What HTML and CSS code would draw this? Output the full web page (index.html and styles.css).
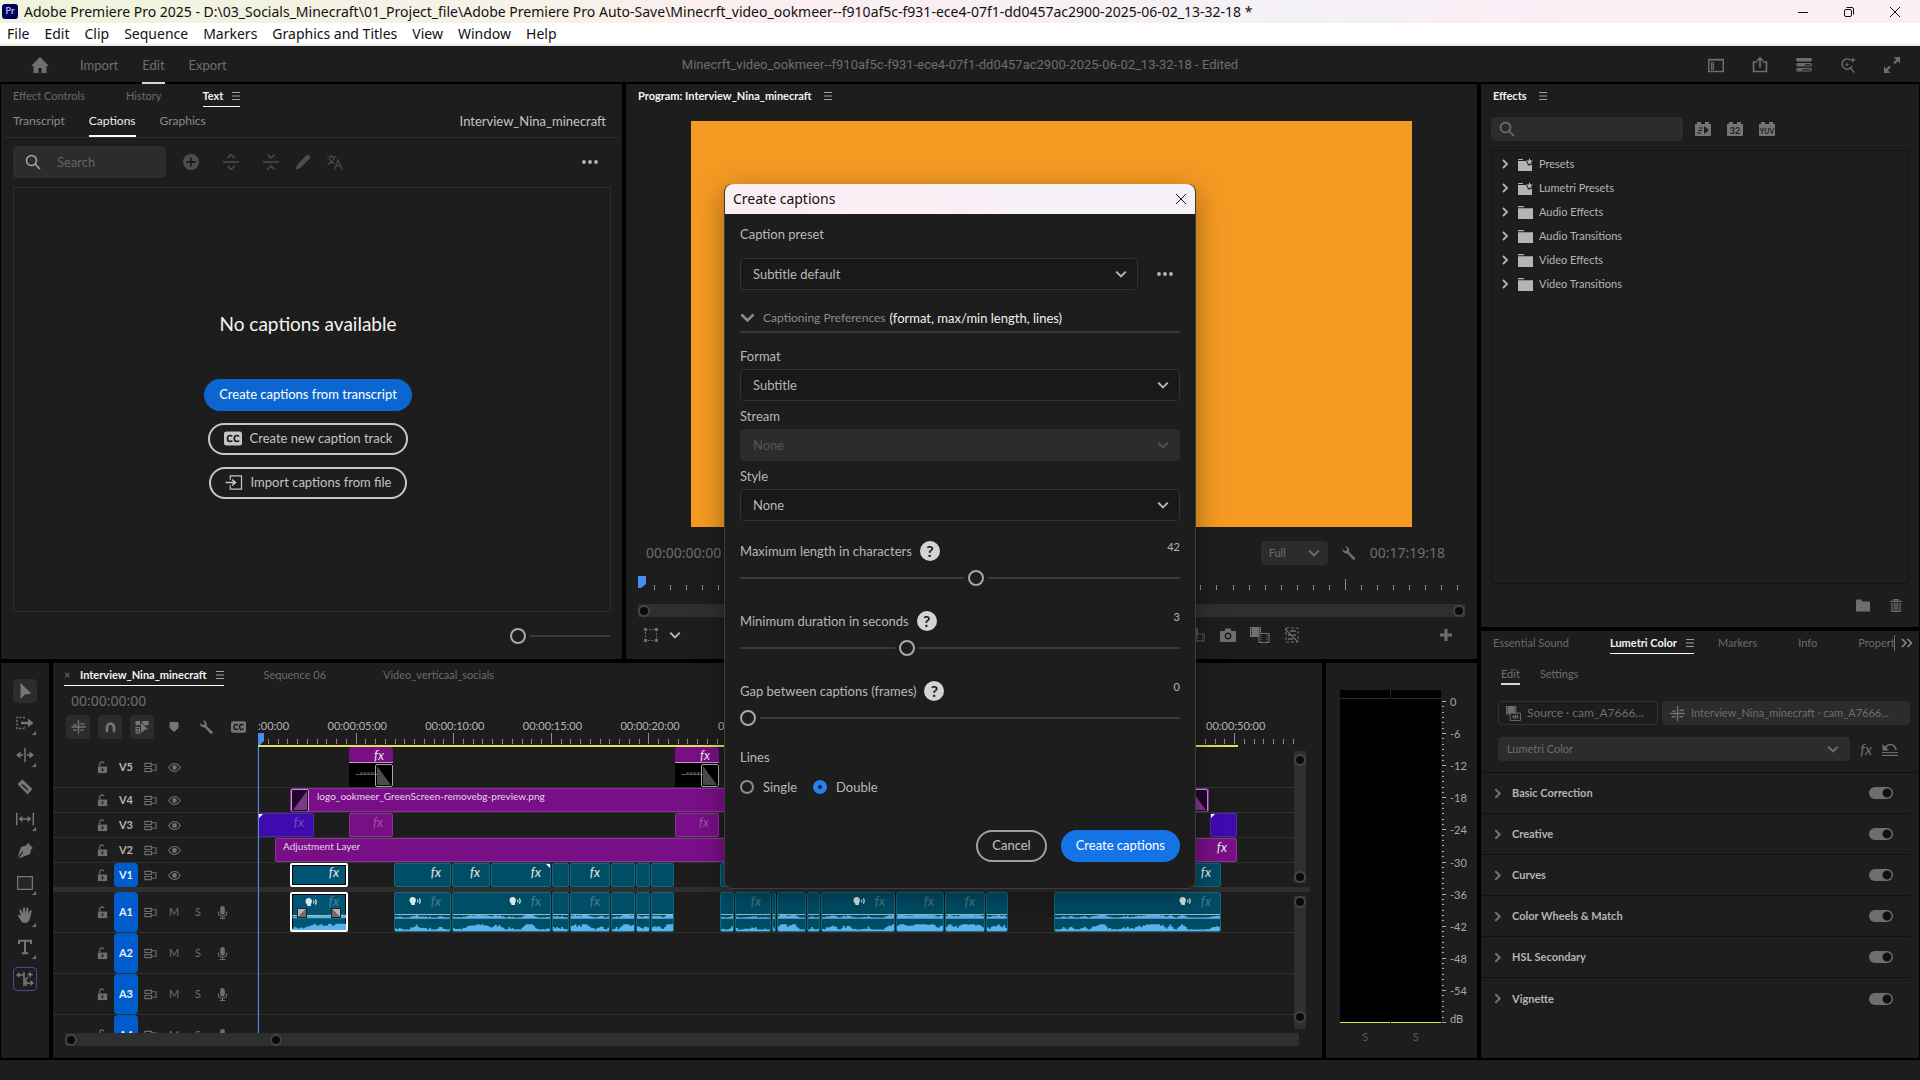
FILE: index.html
```html
<!DOCTYPE html>
<html lang="en">
<head>
  <meta charset="utf-8">
  <title>Adobe Premiere Pro 2025</title>
  <link rel="stylesheet" href="styles.css">
</head>
<body>
  <svg class="sprite" aria-hidden="true">
    <symbol id="home" viewBox="0 0 18 16"><path d="M9 0 18 9h-2.500v7h-5v-5h-3v5h-5V9H0z" fill="currentColor"/></symbol>
    <symbol id="menu" viewBox="0 0 8 8"><path d="M0 .5h8M0 4h8M0 7.500h8" stroke="currentColor"/></symbol>
    <symbol id="search" viewBox="0 0 16 16"><g fill="none" stroke="currentColor" stroke-width="1.500"><circle cx="6.500" cy="6.500" r="5"/><path d="m10 10 5 5"/></g></symbol>
    <symbol id="down" viewBox="0 0 10 10"><path d="m1 3 4 4 4-4" fill="none" stroke="currentColor" stroke-width="1.700"/></symbol>
    <symbol id="right" viewBox="0 0 10 10"><path d="m3 1 4 4-4 4" fill="none" stroke="currentColor" stroke-width="1.800"/></symbol>
    <symbol id="dots" viewBox="0 0 16 16"><g fill="currentColor"><circle cx="2" cy="8" r="1.900"/><circle cx="8" cy="8" r="1.900"/><circle cx="14" cy="8" r="1.900"/></g></symbol>
    <symbol id="close" viewBox="0 0 12 12"><path d="m1 1 10 10M11 1 1 11" stroke="currentColor"/></symbol>
    <symbol id="minimize" viewBox="0 0 12 12"><path d="M1 6.500h10" stroke="currentColor"/></symbol>
    <symbol id="restore" viewBox="0 0 12 12"><g fill="none" stroke="currentColor"><rect x="1.500" y="3.500" width="7" height="7" rx="1.500"/><path d="M3.500 1.500H9q1.500 0 1.500 1.500v5.500"/></g></symbol>
    <symbol id="layout" viewBox="0 0 16 16"><rect x=".75" y="2.500" width="14.500" height="12" fill="none" stroke="currentColor" stroke-width="1.500"/><path d="M1 3h14M3.500 5.500h2v7h-2zM3.500 7.800h2M3.500 10.200h2" stroke="currentColor" fill="none"/></symbol>
    <symbol id="share" viewBox="0 0 16 16"><path d="M5 5H1.500v9.500h13V5H11M8 11V1M5 4l3-3 3 3" fill="none" stroke="currentColor" stroke-width="1.600"/></symbol>
    <symbol id="progress" viewBox="0 0 16 16"><g fill="none" stroke="currentColor" stroke-width="1.200"><rect x=".6" y="1.600" width="14.800" height="2.400" rx="1.200" fill="currentColor"/><rect x=".6" y="6.600" width="14.800" height="2.400" rx="1.200"/><rect x=".6" y="11.600" width="14.800" height="2.400" rx="1.200"/><path d="M2 7.800h7M2 12.800h4" stroke-width="2"/></g></symbol>
    <symbol id="discover" viewBox="0 0 16 16"><g fill="none" stroke="currentColor" stroke-width="1.300"><path d="M11 3.500a5.200 5.200 0 1 0 1 5.500M10.500 11l3.500 4.500"/></g><path d="m13 0 .8 2.200L16 3l-2.200.8L13 6l-.8-2.200L10 3l2.200-.8zM7 5l.6 1.900 1.900.6-1.900.6L7 10l-.6-1.900-1.900-.6 1.900-.6z" fill="currentColor"/></symbol>
    <symbol id="expand" viewBox="0 0 16 16"><path d="M9.500 0H16v6.500l-2.200-2.200-3 3-1.600-1.600 3-3zM6.500 16H0V9.500l2.200 2.200 3-3 1.600 1.600-3 3z" fill="currentColor"/></symbol>
    <symbol id="add" viewBox="0 0 16 16"><circle cx="8" cy="8" r="8" fill="currentColor"/><path d="M8 3.500v9M3.500 8h9" stroke="#1d1d1d" stroke-width="1.800"/></symbol>
    <symbol id="split" viewBox="0 0 18 18"><path d="M0 9h18M5 4.500l4-4 4 4M5 13.500l4 4 4-4" fill="none" stroke="currentColor" stroke-width="1.700"/></symbol>
    <symbol id="merge" viewBox="0 0 18 18"><path d="M0 9h18M5 .5l4 4 4-4M5 17.500l4-4 4 4" fill="none" stroke="currentColor" stroke-width="1.700"/></symbol>
    <symbol id="pencil" viewBox="0 0 16 16"><path d="M11.500 1.200q1.200-1.200 2.400 0l1 1q1.100 1.200 0 2.300L5 14.200.5 15.800 2 11z" fill="currentColor"/></symbol>
    <symbol id="translate" viewBox="0 0 16 16"><g fill="none" stroke="currentColor" stroke-width="1.200"><path d="M0 3h9M4.500 1v2M7.500 3Q6 8 .5 10.500M2 4.500Q4 8 7.500 10"/><path d="m7.500 15.500 3.700-9.500 3.800 9.500M9 12h5"/></g></symbol>
    <symbol id="cc" viewBox="0 0 18 14"><rect width="18" height="14" rx="2.500" fill="currentColor"/><path d="M8.200 5Q7.600 4 6 4 3.500 4 3.500 7T6 10q1.600 0 2.200-1M15 5q-.6-1-2.200-1-2.500 0-2.500 3t2.500 3q1.600 0 2.200-1" fill="none" stroke="#1d1d1d" stroke-width="1.700"/></symbol>
    <symbol id="import" viewBox="0 0 18 16"><path d="M5 5V1h12v14H5v-4" fill="none" stroke="currentColor" stroke-width="1.300"/><path d="M0 8h10M7 5l3.500 3L7 11" fill="none" stroke="currentColor" stroke-width="1.700"/></symbol>
    <symbol id="margins" viewBox="0 0 16 16"><rect x="2.500" y="2.500" width="11" height="11" fill="none" stroke="currentColor" stroke-dasharray="2 1.600"/><path d="M1 1h3v3H1zM12 1h3v3h-3zM1 12h3v3H1zM12 12h3v3h-3z" fill="currentColor"/></symbol>
    <symbol id="wrench" viewBox="0 0 16 16"><path d="M3.500.7 6 3 5.500 5.200 3 5.700.8 3.500Q0 7.800 5 8.500q1 0 1.700.7l5.600 6.200q1 1 2.300.1 1.200-1.400.1-2.500L8.600 7.400Q8 6.500 8.200 5.500 8.200.5 3.500.7z" fill="currentColor"/></symbol>
    <symbol id="camera" viewBox="0 0 16 14"><path d="M1 3h3.500L5.500.5h5l1 2.500H15q1 0 1 1v9q0 1-1 1H1q-1 0-1-1V4q0-1 1-1z" fill="currentColor"/><circle cx="8" cy="8" r="2.700" fill="none" stroke="#1d1d1d" stroke-width="1.500"/></symbol>
    <symbol id="compare" viewBox="0 0 20 16"><path d="M0 0h11v10H0z" fill="currentColor"/><path d="M1.500 1v8M9.500 1v8" stroke="#1d1d1d" stroke-dasharray="1 1"/><path d="M9 6.500h10v9H9z" fill="#1d1d1d" stroke="currentColor"/><path d="M11 8v7M17 8v7" stroke="currentColor" stroke-dasharray="1 1"/></symbol>
    <symbol id="proxy" viewBox="0 0 16 16"><path d="M2 1h12v14H2z" fill="none" stroke="currentColor" stroke-dasharray="3 2"/><path d="m1 2 13 13M6 4l6 0M4 8h4M9 8h3M4 12h5" stroke="currentColor" stroke-width="1.300"/></symbol>
    <symbol id="plus" viewBox="0 0 12 12"><path d="M6 0v12M0 6h12" stroke="currentColor" stroke-width="3"/></symbol>
    <symbol id="badge" viewBox="0 0 16 14"><path d="M0 2h2V0h4v2h4V0h4v2h2v11q0 1-1 1H1q-1 0-1-1z" fill="currentColor"/></symbol>
    <symbol id="fast" viewBox="0 0 16 14"><path d="M0 2h2V0h4v2h4V0h4v2h2v11q0 1-1 1H1q-1 0-1-1z" fill="currentColor"/><path d="M9 4l5 4-5 4z" fill="#1d1d1d"/><path d="M4 6h4M3 8.500h4M2 11h4" stroke="#1d1d1d"/></symbol>
    <symbol id="folder" viewBox="0 0 14 12"><path d="M0 0h5l1 1H0zM0 2h14v10H0z" fill="currentColor"/></symbol>
    <symbol id="starfolder" viewBox="0 0 15 13"><path d="M0 1h5v1H0zM0 3h8l2 4.500 4-.5v6H0z" fill="currentColor"/><path d="m11.500 0 .9 2.400 2.600.1-2 1.700.7 2.500-2.200-1.400-2.200 1.400.7-2.500-2-1.700 2.600-.1z" fill="currentColor"/></symbol>
    <symbol id="bin" viewBox="0 0 14 12"><path d="M0 1q0-1 1-1h4l1.500 2H13q1 0 1 1v9H0z" fill="currentColor"/></symbol>
    <symbol id="trash" viewBox="0 0 12 14"><path d="M0 2.500h12M4 2V.7h4V2M1.500 4v9.300h9V4M4 4v8M6 4v8M8 4v8" fill="none" stroke="currentColor" stroke-width="1.200"/></symbol>
    <symbol id="clipicon" viewBox="0 0 16 16"><path d="M0 0h11v9H0z" fill="currentColor"/><path d="M1.500 1v8M9.500 1v8" stroke="#1d1d1d" stroke-dasharray="1 1"/><path d="M4.500 7.500h11v8h-11z" fill="#1d1d1d" stroke="currentColor"/><path d="M6.500 11.500h7M8 9.500v4M10 9v5M12 9.500v4" stroke="currentColor"/></symbol>
    <symbol id="seq" viewBox="0 0 16 16"><path d="M8 0v16M0 8h16M2 5.500h4M2 11.500h4M10 4.500h5M10 11.500h4" fill="none" stroke="currentColor" stroke-width="1.500"/></symbol>
    <symbol id="reset" viewBox="0 0 16 14"><path d="M3 8q1-5.500 5.500-5.500T14 8" fill="none" stroke="currentColor" stroke-width="1.700"/><path d="M.5 2v6.500H7z" fill="currentColor"/><path d="M0 10.500h16M0 13.300h16" stroke="currentColor" stroke-width="1.200"/></symbol>
    <symbol id="magnet" viewBox="0 0 16 16"><path d="M4 14V8.500a4 4.500 0 0 1 8 0V14" fill="none" stroke="currentColor" stroke-width="3"/></symbol>
    <symbol id="linked" viewBox="0 0 16 16"><path d="M0 1h6v5H0zM8 1h7v5H8z" fill="currentColor"/><path d="M.6 8.600h4v2.600h-4zM.6 12.600h4v2.600h-4z" fill="none" stroke="currentColor" stroke-width="1.200"/><path d="m5.500 2 10 9-5 .5-4.500 4.500z" fill="currentColor" stroke="#2e2e2e"/></symbol>
    <symbol id="marker" viewBox="0 0 10 10"><path d="M1.500 0h7q1 0 1 1v5L5 10 .5 6V1q0-1 1-1z" fill="currentColor"/></symbol>
    <symbol id="lock" viewBox="0 0 12 14"><path d="M1 6h10v7H1z" fill="currentColor"/><path d="M3 6V4q0-3 2.500-3Q7 1 7.500 2.500" fill="none" stroke="currentColor" stroke-width="1.300"/><path d="M6 8v3" stroke="#1d1d1d" stroke-width="1.800"/></symbol>
    <symbol id="sync" viewBox="0 0 14 12"><g fill="none" stroke="currentColor" stroke-width="1.200"><path d="M1 1.600h7v3.300H1zM1 7.100h7v3.300H1zM8 3h5v6H8"/></g></symbol>
    <symbol id="eye" viewBox="0 0 14 12"><path d="M.7 6Q3.500 1.700 7 1.700T13.300 6Q10.500 10.300 7 10.300T.7 6z" fill="none" stroke="currentColor" stroke-width="1.300"/><circle cx="7" cy="6" r="2.600" fill="currentColor"/></symbol>
    <symbol id="mic" viewBox="0 0 10 14"><rect x="2.500" width="5" height="9.500" rx="2.500" fill="currentColor"/><path d="M.6 6v1.500Q.6 11 5 11t4.400-3.500V6M5 11v2M2 13.400h6" fill="none" stroke="currentColor" stroke-width="1.200"/></symbol>
    <symbol id="speech" viewBox="0 0 12 10"><path d="M3.200 0a3.200 3.600 0 0 1 3.200 3.600q0 1.600-1 2.400V8H2L1.700 6.500Q0 5.600 0 3.600A3.200 3.600 0 0 1 3.200 0z" fill="currentColor"/><path d="M8 2.500q1 1.500 0 3M9.800 1.300q2 2.700 0 5.400" fill="none" stroke="currentColor" stroke-width="1.100"/></symbol>
    <symbol id="t-select" viewBox="0 0 16 16"><path d="M3.500 0v16l4-4.300 7-1.200z" fill="currentColor"/></symbol>
    <symbol id="t-forward" viewBox="0 0 18 16"><path d="M9 2.500H1v11h8v-2" fill="none" stroke="currentColor" stroke-dasharray="2 1.500" stroke-width="1.400"/><path d="M5 6.700h7V3.500L17.500 8 12 12.500V9.300H5z" fill="currentColor"/></symbol>
    <symbol id="t-ripple" viewBox="0 0 20 16"><path d="M10 0v16M2 8h6M12 8h6" stroke="currentColor" stroke-width="1.600"/><path d="m0 8 5-4v8zM20 8l-5-4v8z" fill="currentColor"/></symbol>
    <symbol id="t-razor" viewBox="0 0 16 16"><path d="m.5 5 5-4.500 10 9.500-5 5.500z" fill="currentColor"/><path d="m5 5.500 6 5.500" stroke="#1d1d1d" stroke-width="1.600"/></symbol>
    <symbol id="t-slip" viewBox="0 0 20 16"><path d="M.8 1v14M19.200 1v14M4 8h12" stroke="currentColor" stroke-width="1.600"/><path d="m3 8 4-3.500v7zM17 8l-4-3.500v7z" fill="currentColor"/></symbol>
    <symbol id="t-pen" viewBox="0 0 16 16"><path d="m11 0 5 5-2 1.500-1 4.500L1.500 15.500 6.500 9 5.500 8.500.5 14.500 4 4l5-1.500z" fill="currentColor"/></symbol>
    <symbol id="t-rect" viewBox="0 0 16 16"><path d="M.6 1.600h14.800v12.800H.6z" fill="#262626" stroke="currentColor" stroke-width="1.200"/></symbol>
    <symbol id="t-hand" viewBox="0 0 16 16"><path d="M.5 8.200Q2 7 4 9.500L2.500 3.500Q3 1.500 4.500 3L6 7V1q1-1.500 2 0l.5 6 1-6q1.200-1.300 2 .3L11 7.500l2-4q1.700-.8 1.700.8L13 11q-.8 5-5.500 5Q4.500 16 3.500 13z" fill="currentColor"/></symbol>
    <symbol id="t-type" viewBox="0 0 16 16"><path d="M2 5V1.800h12V5M8 2v12M5 14.200h6" fill="none" stroke="currentColor" stroke-width="2"/></symbol>
    <symbol id="t-remix" viewBox="0 0 18 16"><path d="M2 4h6M8 1v14M8 12h7M10 9v6M12 6l-3 3" fill="none" stroke="currentColor" stroke-width="1.600"/><path d="m0 4 3.500-3v6zM18 12l-3.500-3v6zM14 0l1 2.500 2.500 1-2.500 1-1 2.500-1-2.500-2.500-1 2.500-1z" fill="currentColor"/></symbol>
    <symbol id="fade-in" viewBox="0 0 18 22" preserveAspectRatio="none"><path d="M0 0h18v22H0z" fill="#23052b"/><path d="M0 22 18 0v22z" fill="#7a3a86"/></symbol>
    <symbol id="fade-out" viewBox="0 0 18 22" preserveAspectRatio="none"><path d="M0 0v22h18z" fill="currentColor"/></symbol>
  </svg>

  <header class="titlebar">
    <span class="logo">Pr</span>
    <span class="window-title">Adobe Premiere Pro 2025 - D:\03_Socials_Minecraft\01_Project_file\Adobe Premiere Pro Auto-Save\Minecrft_video_ookmeer--f910af5c-f931-ece4-07f1-dd0457ac2900-2025-06-02_13-32-18 *</span>
    <button class="win-btn" aria-label="Minimize"><svg><use href="#minimize"/></svg></button>
    <button class="win-btn" aria-label="Restore"><svg><use href="#restore"/></svg></button>
    <button class="win-btn" aria-label="Close"><svg><use href="#close"/></svg></button>
  </header>

  <nav class="menubar">
    <button>File</button><button>Edit</button><button>Clip</button><button>Sequence</button><button>Markers</button><button>Graphics and Titles</button><button>View</button><button>Window</button><button>Help</button>
  </nav>

  <div class="appbar">
    <div class="modes">
      <button class="home" aria-label="Home"><svg><use href="#home"/></svg></button>
      <button>Import</button><button class="active">Edit</button><button>Export</button>
    </div>
    <div class="project">Minecrft_video_ookmeer--f910af5c-f931-ece4-07f1-dd0457ac2900-2025-06-02_13-32-18 - Edited</div>
    <div class="quick">
      <button aria-label="Workspaces"><svg><use href="#layout"/></svg></button>
      <button aria-label="Quick export"><svg><use href="#share"/></svg></button>
      <button aria-label="Progress"><svg><use href="#progress"/></svg></button>
      <button aria-label="Discover"><svg><use href="#discover"/></svg></button>
      <button aria-label="Maximize"><svg><use href="#expand"/></svg></button>
    </div>
  </div>

  <main class="workspace">
    <div class="main-area">
      <div class="top-row">
        <section class="panel text-panel">
          <div class="tabs">
            <button class="tab">Effect Controls<svg><use href="#menu"/></svg></button>
            <button class="tab">History<svg><use href="#menu"/></svg></button>
            <button class="tab active">Text<svg><use href="#menu"/></svg></button>
          </div>
          <div class="subtabs">
            <button>Transcript</button><button class="active">Captions</button><button>Graphics</button>
            <span class="seq-name">Interview_Nina_minecraft</span>
          </div>
          <div class="caption-tools">
            <label class="search"><svg><use href="#search"/></svg><input type="text" placeholder="Search" aria-label="Search captions"></label>
            <button aria-label="Add caption"><svg><use href="#add"/></svg></button>
            <button aria-label="Split caption"><svg><use href="#split"/></svg></button>
            <button aria-label="Merge captions"><svg><use href="#merge"/></svg></button>
            <button aria-label="Edit caption"><svg><use href="#pencil"/></svg></button>
            <button aria-label="Translate"><svg><use href="#translate"/></svg></button>
            <button class="more" aria-label="More"><svg><use href="#dots"/></svg></button>
          </div>
          <div class="empty">
            <h2>No captions available</h2>
            <button class="pill primary">Create captions from transcript</button>
            <button class="pill outline"><svg><use href="#cc"/></svg>Create new caption track</button>
            <button class="pill outline"><svg><use href="#import"/></svg>Import captions from file</button>
          </div>
          <div class="text-footer"><input type="range" min="0" max="10" value="0" aria-label="Text size"></div>
        </section>

        <section class="panel program">
          <div class="tabs"><button class="tab active plain">Program: Interview_Nina_minecraft<svg><use href="#menu"/></svg></button></div>
          <div class="viewer"><div class="frame"></div></div>
          <div class="monitor-row">
            <span class="timecode">00:00:00:00</span>
            <span class="select full"><select aria-label="Playback resolution"><option>Full</option></select><svg><use href="#down"/></svg></span>
            <button aria-label="Settings"><svg><use href="#wrench"/></svg></button>
            <span class="timecode">00:17:19:18</span>
          </div>
          <div class="monitor-ruler" id="monitorRuler"><svg class="head" viewBox="0 0 8 12"><path d="M0 0h8v8l-5 4H0z" fill="#4590ef"/></svg></div>
          <div class="hscroll monitor-scroll"><i></i><i></i></div>
          <div class="transport">
            <button aria-label="Safe margins"><svg><use href="#margins"/></svg></button>
            <button class="small" aria-label="Overlay options"><svg><use href="#down"/></svg></button>
            <span class="spacer"></span>
            <button aria-label="Extract"><svg><use href="#compare"/></svg></button>
            <button aria-label="Export frame"><svg><use href="#camera"/></svg></button>
            <button class="wide" aria-label="Comparison view"><svg><use href="#compare"/></svg></button>
            <button aria-label="Toggle proxies"><svg><use href="#proxy"/></svg></button>
            <button class="add" aria-label="Button editor"><svg><use href="#plus"/></svg></button>
          </div>
        </section>
      </div>

      <div class="bottom-row">
        <section class="panel toolbox">
          <button class="on" aria-label="Selection"><svg><use href="#t-select"/></svg></button>
          <button class="flyout" aria-label="Track select forward"><svg><use href="#t-forward"/></svg></button>
          <button class="flyout" aria-label="Ripple edit"><svg><use href="#t-ripple"/></svg></button>
          <button aria-label="Razor"><svg><use href="#t-razor"/></svg></button>
          <button class="flyout" aria-label="Slip"><svg><use href="#t-slip"/></svg></button>
          <button aria-label="Pen"><svg><use href="#t-pen"/></svg></button>
          <button class="flyout" aria-label="Rectangle"><svg><use href="#t-rect"/></svg></button>
          <button class="flyout" aria-label="Hand"><svg><use href="#t-hand"/></svg></button>
          <button class="flyout" aria-label="Type"><svg><use href="#t-type"/></svg></button>
          <button class="remix" aria-label="Generative extend"><svg><use href="#t-remix"/></svg></button>
        </section>

        <section class="panel timeline">
          <div class="tabs">
            <button class="tab active"><span class="x">×</span>Interview_Nina_minecraft<svg><use href="#menu"/></svg></button>
            <button class="tab"><span class="x"></span>Sequence 06<svg><use href="#menu"/></svg></button>
            <button class="tab"><span class="x"></span>Video_verticaal_socials</button>
          </div>
          <div class="timeline-head">
            <div class="controls">
              <div class="timecode">00:00:00:00</div>
              <div class="toggles">
                <button class="on" aria-label="Nest"><svg><use href="#seq"/></svg></button>
                <button class="on" aria-label="Snap"><svg><use href="#magnet"/></svg></button>
                <button class="on" aria-label="Linked selection"><svg><use href="#linked"/></svg></button>
                <button class="marker" aria-label="Add marker"><svg><use href="#marker"/></svg></button>
                <button aria-label="Timeline settings"><svg><use href="#wrench"/></svg></button>
                <button aria-label="Caption tracks"><svg><use href="#cc"/></svg></button>
              </div>
            </div>
            <div class="ruler" id="ruler"></div>
          </div>
          <div class="tracks">
            <div class="group"><div class="rows" id="videoTracks"></div><div class="vscroll"><i></i><i></i></div></div>
            <div class="divider"></div>
            <div class="group audio"><div class="rows" id="audioTracks"></div><div class="vscroll"><i></i><i></i></div></div>
            <div class="playhead"></div>
          </div>
          <div class="hscroll timeline-scroll"><i></i><i></i></div>
        </section>

        <section class="panel meters">
          <div class="meter"><div class="bar"></div><div class="bar"></div></div>
          <div class="db" id="db"></div>
          <div class="solo"><button>S</button><button>S</button></div>
        </section>
      </div>
    </div>

    <aside class="side">
      <section class="panel effects">
        <div class="tabs"><button class="tab active plain">Effects<svg><use href="#menu"/></svg></button></div>
        <div class="effects-tools">
          <label class="search"><svg><use href="#search"/></svg><input type="text" aria-label="Search effects"></label>
          <button class="badge" aria-label="Accelerated effects"><svg><use href="#fast"/></svg></button>
          <button class="badge" aria-label="32-bit color"><svg><use href="#badge"/></svg><b>32</b></button>
          <button class="badge yuv" aria-label="YUV effects"><svg><use href="#badge"/></svg><b>YUV</b></button>
        </div>
        <ul class="effects-list">
          <li><svg class="chev"><use href="#right"/></svg><svg class="dir"><use href="#starfolder"/></svg>Presets</li>
          <li><svg class="chev"><use href="#right"/></svg><svg class="dir"><use href="#starfolder"/></svg>Lumetri Presets</li>
          <li><svg class="chev"><use href="#right"/></svg><svg class="dir"><use href="#folder"/></svg>Audio Effects</li>
          <li><svg class="chev"><use href="#right"/></svg><svg class="dir"><use href="#folder"/></svg>Audio Transitions</li>
          <li><svg class="chev"><use href="#right"/></svg><svg class="dir"><use href="#folder"/></svg>Video Effects</li>
          <li><svg class="chev"><use href="#right"/></svg><svg class="dir"><use href="#folder"/></svg>Video Transitions</li>
        </ul>
        <div class="effects-footer">
          <button aria-label="New bin"><svg><use href="#bin"/></svg></button>
          <button aria-label="Delete"><svg><use href="#trash"/></svg></button>
        </div>
      </section>

      <section class="panel lumetri">
        <div class="tabs-wrap">
          <div class="tabs">
            <button class="tab">Essential Sound<svg><use href="#menu"/></svg></button>
            <button class="tab active">Lumetri Color<svg><use href="#menu"/></svg></button>
            <button class="tab">Markers<svg><use href="#menu"/></svg></button>
            <button class="tab">Info<svg><use href="#menu"/></svg></button>
            <button class="tab">Propert</button>
          </div>
          <button class="overflow" aria-label="More panels"><svg viewBox="0 0 12 10"><path d="m1 1 4 4-4 4M6.500 1l4 4-4 4" fill="none" stroke="currentColor" stroke-width="1.500"/></svg></button>
        </div>
        <div class="lum-tabs"><button class="active">Edit</button><button>Settings</button></div>
        <div class="lum-clips">
          <button class="source"><svg><use href="#clipicon"/></svg>Source · cam_A7666...</button>
          <button class="master"><svg><use href="#seq"/></svg>Interview_Nina_minecraft · cam_A7666...</button>
        </div>
        <div class="lum-effect">
          <span class="select"><select aria-label="Effect"><option>Lumetri Color</option></select><svg><use href="#down"/></svg></span>
          <button class="fx">fx</button>
          <button aria-label="Reset"><svg><use href="#reset"/></svg></button>
        </div>
        <div class="sections">
          <div class="section"><svg><use href="#right"/></svg><label for="s1">Basic Correction</label><input id="s1" type="checkbox" checked></div>
          <div class="section"><svg><use href="#right"/></svg><label for="s2">Creative</label><input id="s2" type="checkbox" checked></div>
          <div class="section"><svg><use href="#right"/></svg><label for="s3">Curves</label><input id="s3" type="checkbox" checked></div>
          <div class="section"><svg><use href="#right"/></svg><label for="s4">Color Wheels &amp; Match</label><input id="s4" type="checkbox" checked></div>
          <div class="section"><svg><use href="#right"/></svg><label for="s5">HSL Secondary</label><input id="s5" type="checkbox" checked></div>
          <div class="section"><svg><use href="#right"/></svg><label for="s6">Vignette</label><input id="s6" type="checkbox" checked></div>
        </div>
      </section>
    </aside>
  </main>

  <footer class="statusbar"></footer>

  <form class="dialog" role="dialog" aria-labelledby="dlgTitle">
    <div class="dialog-title"><span id="dlgTitle">Create captions</span><button type="button" aria-label="Close"><svg><use href="#close"/></svg></button></div>
    <div class="dialog-body">
      <label class="preset-label" for="preset">Caption preset</label>
      <div class="preset">
        <span class="select"><select id="preset"><option>Subtitle default</option></select><svg><use href="#down"/></svg></span>
        <button type="button" aria-label="Preset options"><svg><use href="#dots"/></svg></button>
      </div>
      <button type="button" class="prefs"><svg><use href="#down"/></svg>Captioning Preferences <span>(format, max/min length, lines)</span></button>

      <label class="field" for="format">Format</label>
      <span class="select"><select id="format"><option>Subtitle</option></select><svg><use href="#down"/></svg></span>
      <label class="field" for="stream">Stream</label>
      <span class="select disabled"><select id="stream" disabled><option>None</option></select><svg><use href="#down"/></svg></span>
      <label class="field" for="style">Style</label>
      <span class="select"><select id="style"><option>None</option></select><svg><use href="#down"/></svg></span>

      <div class="sliders">
        <div class="slider">
          <div class="slider-head"><label for="maxlen">Maximum length in characters</label><b class="help">?</b><output for="maxlen">42</output></div>
          <input id="maxlen" type="range" min="0" max="78" value="42">
        </div>
        <div class="slider">
          <div class="slider-head"><label for="mindur">Minimum duration in seconds</label><b class="help">?</b><output for="mindur">3</output></div>
          <input id="mindur" type="range" min="0" max="8" value="3">
        </div>
        <div class="slider">
          <div class="slider-head"><label for="gap">Gap between captions (frames)</label><b class="help">?</b><output for="gap">0</output></div>
          <input id="gap" type="range" min="0" max="30" value="0">
        </div>
      </div>

      <div class="lines-label">Lines</div>
      <div class="radios">
        <input type="radio" name="lines" id="single"><label for="single">Single</label>
        <input type="radio" name="lines" id="double" checked><label for="double">Double</label>
      </div>
      <div class="actions">
        <button type="button" class="pill outline">Cancel</button>
        <button type="button" class="pill primary">Create captions</button>
      </div>
    </div>
  </form>

  <script src="script.js"></script>
</body>
</html>
```
FILE: script.js
```js
// visible length of the timeline, in seconds
const SPAN = 53.07;
const pct = (sec) => ((sec / SPAN) * 100).toFixed(3) + "%";

const icon = (name, cls = "") => `<svg class="${cls}"><use href="#${name}"/></svg>`;

// [start, end, kind, options]
const videoTracks = [
  { name: "V5", cls: "tall", clips: [
    [4.66, 6.92, "title", {}],
    [21.36, 23.62, "title", {}],
  ] },
  { name: "V4", clips: [[1.64, 48.72, "purple", { label: "logo_ookmeer_GreenScreen-removebg-preview.png", fades: true }]] },
  { name: "V3", clips: [
    [0, 2.87, "violet", { fx: "dim", corner: "left" }],
    [4.66, 6.92, "purple", { fx: "dim" }],
    [21.36, 23.62, "purple", { fx: "dim" }],
    [48.77, 50.15, "violet", { corner: "left" }],
  ] },
  { name: "V2", clips: [[0.87, 50.15, "purple", { label: "Adjustment Layer", fx: "on" }]] },
  { name: "V1", cls: "last", target: true, clips: [
    [1.64, 4.61, "teal", { fx: "on", selected: true }],
    [6.97, 9.89, "teal", { fx: "on" }],
    [9.94, 11.89, "teal", { fx: "on" }],
    [11.94, 15.01, "teal", { fx: "on", corner: "right" }],
    [15.06, 15.93, "teal", {}],
    [15.98, 18.03, "teal", { fx: "on" }],
    [18.08, 19.31, "teal", {}],
    [19.36, 20.08, "teal", {}],
    [20.13, 21.31, "teal", {}],
    [23.67, 49.33, "teal", { fx: "on" }],
  ] },
];

const audioTracks = [
  { name: "A1", clips: [
    [1.64, 4.61, "wave", { fx: "dim", speech: true, selected: true }],
    [6.97, 9.89, "wave", { fx: "dim", speech: true }],
    [9.94, 15.01, "wave", { fx: "dim", speech: true }],
    [15.06, 15.93, "wave", {}],
    [15.98, 18.03, "wave", { fx: "dim" }],
    [18.08, 19.31, "wave", {}],
    [19.36, 20.08, "wave", {}],
    [20.13, 21.31, "wave", {}],
    [23.67, 24.39, "wave", {}],
    [24.44, 26.28, "wave", { fx: "dim" }],
    [26.33, 26.54, "wave", {}],
    [26.59, 28.07, "wave", {}],
    [28.12, 28.79, "wave", {}],
    [28.84, 32.63, "wave", { fx: "dim", speech: true }],
    [32.68, 35.14, "wave", { fx: "dim" }],
    [35.19, 37.24, "wave", { fx: "dim" }],
    [37.3, 38.42, "wave", {}],
    [40.78, 49.33, "wave", { fx: "dim", speech: true }],
  ] },
  { name: "A2", clips: [] },
  { name: "A3", clips: [] },
  { name: "A4", clips: [] },
];

let seed = 7;
const rand = () => (seed = (seed * 16807) % 2147483647) / 2147483647;

// two channels of bars, each standing on its own base line
const waveform = (seconds) => {
  const n = Math.max(4, Math.round(seconds * 10));
  let d = "";
  let level = 0.4;
  for (let i = 0; i < n; i++) {
    level = Math.min(1, Math.max(0.1, level + (rand() - 0.52) * 0.8));
    const a = 27 - (1 + level * 3);
    const b = 40 - (1 + level * 6);
    d += `M${i} 27V${a.toFixed(1)}h1V27zM${i} 40V${b.toFixed(1)}h1V40z`;
  }
  return `<svg class="waveform" viewBox="0 0 ${n} 40" preserveAspectRatio="none"><path d="${d}"/></svg>`;
};

const clip = ([start, end, kind, o]) => {
  let inner = "";
  if (kind === "title") {
    inner = `<div class="strip"><i class="fx on">fx</i></div><div class="thumb"><svg class="caption-text" viewBox="0 0 26 4"><path d="M4 1h16M0 2.500h26" stroke="#888" stroke-width=".8" stroke-dasharray="3 .6"/></svg>${icon("fade-out", "fade")}</div>`;
  } else {
    if (kind === "wave") inner += waveform(end - start) + '<div class="level"></div>';
    if (o.fades) inner += icon("fade-in", "fade start") + icon("fade-out", "fade end");
    if (o.label) inner += `<span class="name">${o.label}</span>`;
    if (o.speech) inner += icon("speech", "speech");
    if (o.fx) inner += `<i class="fx ${o.fx}">fx</i>`;
    if (o.corner) inner += `<b class="corner ${o.corner}"></b>`;
    if (kind === "wave" && o.selected) inner += '<b class="handle"></b><b class="handle out"></b>';
  }
  return `<div class="clip ${kind} ${o.selected ? "selected" : ""}" style="left:${pct(start)};width:${pct(end - start)}">${inner}</div>`;
};

const trackRow = (t, audio) => `<div class="track ${t.cls || ""} ${audio ? "sound" : ""}">
  <div class="track-head">
    ${icon("lock")}<button class="patch ${audio || t.target ? "target" : ""}">${t.name}</button>${icon("sync")}
    ${audio ? `<button>M</button><button>S</button>${icon("mic")}` : icon("eye")}
  </div>
  <div class="lane">${t.clips.map(clip).join("")}</div>
</div>`;

document.getElementById("videoTracks").innerHTML = videoTracks.map((t) => trackRow(t, false)).join("");
document.getElementById("audioTracks").innerHTML = audioTracks.map((t) => trackRow(t, true)).join("");

// timeline ruler, a tick every half second
let marks = "";
for (let s = 0; s < SPAN; s += 0.5) {
  const major = s > 0 && s % 5 === 0;
  if (major || s % 1.5 !== 0.75) marks += `<i class="${major ? "major" : ""}" style="left:${pct(s)}"></i>`;
  if (major) marks += `<span style="left:${pct(s)}">00:00:${String(s).padStart(2, "0")}:00</span>`;
}
document.getElementById("ruler").innerHTML =
  `<span class="first">:00:00</span>${marks}<b style="width:${pct(50.2)}"></b>` +
  '<svg class="head" viewBox="0 0 6 12"><path d="M0 0h6v8l-4 4H0z" fill="#4590ef"/></svg>';

// program monitor ruler
let ticks = "";
for (let i = 1; i <= 51; i++) {
  ticks += `<i class="${i % 11 === 0 ? "major" : ""}" style="left:${(i * 1.943).toFixed(2)}%"></i>`;
}
document.getElementById("monitorRuler").insertAdjacentHTML("beforeend", ticks);

// audio meter scale, 0 to -60 dB
let scale = "";
for (let i = 0; i <= 60; i++) {
  const major = i % 6 === 0;
  scale += `<i class="${major ? "major" : ""}" style="top:${(i / 0.6).toFixed(2)}%"></i>`;
  if (major) scale += `<span class="${i === 60 ? "unit" : ""}" style="top:${(i / 0.6).toFixed(2)}%">${i === 60 ? "dB" : i === 0 ? "0" : -i}</span>`;
}
document.getElementById("db").innerHTML = scale;
```
FILE: styles.css
```css
* {
  box-sizing: border-box;
}

body {
  margin: 0;
  height: 100vh;
  display: flex;
  flex-direction: column;
  overflow: hidden;
  background: #000;
  color: #b4b4b4;
  font: 11px/16px Lato, "Noto Sans", sans-serif;
}

button,
input,
select {
  margin: 0;
  padding: 0;
  border: 0;
  background: none;
  color: inherit;
  font: inherit;
}

button {
  display: flex;
  align-items: center;
  justify-content: center;
  white-space: nowrap;
}

svg {
  display: block;
  width: 16px;
  height: 16px;
  flex: none;
}

.sprite {
  position: absolute;
  width: 0;
  height: 0;
}

/* window chrome */
.titlebar {
  display: flex;
  align-items: center;
  flex: none;
  height: 23px;
  padding: 0 2px;
  background: linear-gradient(90deg, #eff4dc, #f7f1e8 28%, #fbeef0 40%, #f4f1f6 68%, #fbeef5 82%);
  color: #111;
  font: 14px/22px "Noto Sans", sans-serif;
}

.logo {
  width: 16px;
  height: 15px;
  margin-right: 6px;
  border-radius: 3px;
  background: #00005b;
  color: #b3b3ff;
  font: bold 9px/14px Lato, sans-serif;
  text-align: center;
}

.window-title {
  flex: 1;
  overflow: hidden;
  white-space: nowrap;
}

.win-btn {
  width: 46px;
  height: 20px;
}

.win-btn svg {
  width: 12px;
  height: 12px;
}

.menubar {
  display: flex;
  flex: none;
  gap: 15px;
  height: 23px;
  padding: 1px 0 0 7px;
  background: #fff;
  border-bottom: 2px solid #ebebeb;
  color: #111;
  font: 14px/20px "Noto Sans", sans-serif;
}

.appbar {
  display: grid;
  grid-template-columns: 1fr auto 1fr;
  flex: none;
  height: 38px;
  border-bottom: 2px solid #000;
  background: #1d1d1d;
  color: #6e6e6e;
  font-size: 13px;
}

.modes {
  display: flex;
  gap: 24px;
  padding-left: 31px;
}

.modes button {
  padding-top: 2px;
  border-bottom: 2px solid transparent;
}

.modes .home {
  margin-right: 7px;
}

.home svg {
  width: 18px;
}

.modes .active {
  border-color: #d6d6d6;
}

.project {
  font: 13px/38px Roboto, sans-serif;
}

.quick {
  display: flex;
  justify-content: flex-end;
  gap: 28px;
  padding-right: 20px;
}

.workspace {
  display: flex;
  flex: 1;
  gap: 4px;
  min-height: 0;
  padding: 0 1px;
}

.main-area {
  display: grid;
  grid-template-rows: minmax(0, 575fr) minmax(0, 395fr);
  gap: 4px;
  flex: 1;
  min-width: 0;
}

.top-row {
  display: grid;
  grid-template-columns: minmax(0, 621fr) minmax(0, 851fr);
  gap: 4px;
}

.bottom-row {
  display: grid;
  grid-template-columns: 48px minmax(0, 1fr) 151px;
  gap: 4px;
}

.side {
  display: grid;
  grid-template-columns: minmax(0, 1fr);
  grid-template-rows: minmax(0, 543fr) minmax(0, 427fr);
  gap: 4px;
  width: 438px;
}

.panel {
  display: flex;
  flex-direction: column;
  min-height: 0;
  background: #1d1d1d;
}

.statusbar {
  flex: none;
  height: 22px;
  border-top: 2px solid #000;
  background: #1d1d1d;
}

/* tabs */
.tabs {
  display: flex;
  flex: none;
  gap: 24px;
  height: 23px;
  padding-left: 12px;
}

.tab {
  flex: none;
  padding-top: 2px;
  border-bottom: 1px solid transparent;
  color: #6b6b6b;
}

.tab svg {
  width: 8px;
  height: 8px;
  margin-left: 9px;
  visibility: hidden;
}

.tab.active {
  border-color: #fff;
  color: #f2f2f2;
  font-weight: bold;
}

.tab.active svg {
  color: #a0a0a0;
  visibility: visible;
}

.tab.plain {
  border-color: transparent;
}

.tab.plain svg {
  margin-left: 12px;
}

/* text panel */
.subtabs {
  display: flex;
  gap: 24px;
  flex: none;
  height: 31px;
  margin: 0 4px;
  padding: 0 12px 0 8px;
  border-bottom: 1px solid #2e2e2e;
  color: #8c8c8c;
  font-size: 12px;
}

.subtabs button {
  border-bottom: 2px solid transparent;
}

.subtabs .active {
  border-color: #fff;
  color: #ececec;
}

.seq-name {
  margin-left: auto;
  color: #c4c4c4;
  font-size: 13px;
  line-height: 29px;
}

.caption-tools {
  display: flex;
  align-items: center;
  flex: none;
  height: 49px;
  padding: 0 20px 2px 12px;
  color: #4c4c4c;
}

.caption-tools button {
  width: 32px;
}

.caption-tools button:nth-of-type(1) {
  margin-left: 9px;
}

.caption-tools button:nth-of-type(2),
.caption-tools button:nth-of-type(3) {
  width: 40px;
}

.caption-tools button:nth-of-type(2) {
  margin-left: 4px;
}

.caption-tools button:nth-of-type(4) {
  margin-left: -4px;
}

.caption-tools .more {
  width: 16px;
  margin-left: auto;
  margin-right: 4px;
  color: #b4b4b4;
}

.search {
  display: flex;
  align-items: center;
  background: #2c2c2c;
  border-radius: 4px;
}

.search input {
  width: 100%;
  min-width: 0;
  outline: 0;
}

.caption-tools .search {
  width: 153px;
  height: 32px;
  gap: 16px;
  padding-left: 12px;
  color: #a8a8a8;
  font-size: 13px;
}

.search input::placeholder {
  color: #626262;
}

.empty {
  display: flex;
  flex: 1;
  flex-direction: column;
  align-items: center;
  gap: 12px;
  margin: 0 11px 0 12px;
  padding: 123px 8px 0 0;
  border: 1px solid #2c2c2c;
}

.empty h2 {
  margin: 0 0 30px;
  color: #f4f4f4;
  font-size: 19px;
  font-weight: normal;
  line-height: 26px;
}

.pill {
  height: 32px;
  padding: 0 14px 2px;
  border-radius: 16px;
  font-size: 13px;
}

.pill.primary {
  padding: 0 15px 2px;
  background: #0d66d0;
  color: #fff;
}

.pill.outline {
  border: 2px solid #c8c8c8;
  color: #c4c4c4;
}

.pill svg {
  width: 18px;
  height: 15px;
  margin-right: 8px;
}

.text-footer {
  display: flex;
  align-items: center;
  justify-content: flex-end;
  flex: none;
  height: 47px;
  padding-right: 12px;
}

.text-footer input {
  width: 100px;
}

input[type="range"] {
  appearance: none;
  height: 16px;
  background: linear-gradient(#3a3a3a, #3a3a3a) center / 100% 2px no-repeat;
}

input[type="range"]::-webkit-slider-thumb {
  appearance: none;
  width: 16px;
  height: 16px;
  border: 2px solid #a8a8a8;
  border-radius: 50%;
  background: #1d1d1d;
  box-shadow: 0 0 0 4px #1d1d1d;
}

/* program monitor */
.program .tabs {
  height: 37px;
  padding-bottom: 14px;
}

.viewer {
  display: flex;
  justify-content: center;
  flex: 1;
  min-height: 0;
}

.frame {
  aspect-ratio: 16 / 9;
  height: 100%;
  background: #f49a22;
}

.monitor-row {
  display: flex;
  align-items: center;
  flex: none;
  height: 49px;
  padding: 2px 32px 0 20px;
  color: #6e6e6e;
}

.timecode {
  color: #6e6e6e;
  font: 14px/20px "Noto Sans", sans-serif;
}

.select {
  position: relative;
  display: block;
}

.select select {
  appearance: none;
  width: 100%;
  height: 32px;
  padding: 0 12px;
  border: 1px solid #333;
  border-radius: 4px;
  background: #191919;
  opacity: 1;
}

.select svg {
  position: absolute;
  top: 50%;
  right: 11px;
  width: 12px;
  height: 12px;
  margin-top: -6px;
  pointer-events: none;
}

.full {
  width: 67px;
  margin-left: auto;
}

.full select {
  height: 24px;
  padding: 0 8px;
  border: 0;
  background: #2c2c2c;
}

.full svg {
  right: 8px;
}

.monitor-row button {
  margin: 0 14px;
}

.monitor-row button svg {
  width: 14px;
  height: 14px;
}

.monitor-ruler {
  position: relative;
  flex: none;
  height: 14px;
  margin: 0 12px;
}

.monitor-ruler i,
.ruler i {
  position: absolute;
  bottom: 0;
  width: 1px;
  height: 5px;
  background: #8c8c8c;
}

.monitor-ruler i.major,
.ruler i.major {
  height: 11px;
}

.monitor-ruler .head {
  position: absolute;
  width: 8px;
  height: 12px;
}

.hscroll {
  display: flex;
  align-items: center;
  justify-content: space-between;
  flex: none;
  height: 13px;
  background: #2f2f2f;
}

.hscroll i,
.vscroll i {
  width: 12px;
  height: 12px;
  border: 2px solid #444;
  border-radius: 50%;
  background: #0a0a0a;
}

.monitor-scroll {
  margin: 14px 12px 0;
}

.transport {
  display: flex;
  align-items: center;
  flex: none;
  height: 36px;
  margin-bottom: 6px;
  padding: 0 25px 0 17px;
  color: #6e6e6e;
}

.transport button {
  width: 16px;
  margin-right: 15px;
}

.transport .small {
  margin-left: -7px;
  color: #b4b4b4;
}

.transport .small svg,
.transport .add svg {
  width: 12px;
  height: 12px;
}

.transport .spacer {
  flex: 1;
}

.transport .wide {
  width: 18px;
}

.transport .wide svg {
  width: 20px;
}

.transport .add {
  width: 12px;
  margin: 0 0 0 125px;
}

/* toolbox */
.toolbox {
  align-items: center;
  gap: 8px;
  padding-top: 16px;
  color: #757575;
}

.toolbox button {
  position: relative;
  width: 24px;
  height: 24px;
  border-radius: 4px;
}

.toolbox svg {
  width: 18px;
}

.toolbox .on {
  background: #2c2c2c;
}

.toolbox .flyout::after {
  content: "";
  position: absolute;
  right: 1px;
  bottom: 0;
  border: 2px solid;
  border-color: transparent #757575 #757575 transparent;
}

.toolbox .remix {
  border: 1px solid #5a3f96;
}

/* timeline */
.timeline .tabs {
  padding-left: 11px;
}

.timeline .x {
  width: 16px;
  color: #757575;
  font-weight: normal;
  text-align: left;
}

.timeline-head {
  display: flex;
  flex: none;
  height: 61px;
  padding-right: 28px;
}

.controls {
  width: 205px;
  padding-left: 13px;
}

.controls .timecode {
  height: 29px;
  padding: 5px 0 0 5px;
}

.toggles {
  display: flex;
  gap: 8px;
  color: #757575;
}

.toggles button {
  width: 24px;
  height: 24px;
  border-radius: 4px;
}

.toggles .on {
  background: #2c2c2c;
}

.toggles .marker svg {
  width: 10px;
  height: 10px;
}

.toggles svg {
  width: 15px;
  height: 14px;
}

.ruler {
  position: relative;
  flex: 1;
  overflow: hidden;
  color: #b4b4b4;
}

.ruler i {
  bottom: 3px;
}

.ruler span {
  position: absolute;
  top: 32px;
  margin-left: -28px;
  white-space: nowrap;
}

.ruler .first {
  margin-left: 0;
}

.ruler b {
  position: absolute;
  bottom: 0;
  left: 0;
  height: 2px;
  background: #e5df56;
}

.ruler .head {
  position: absolute;
  bottom: 2px;
  left: 0;
  width: 6px;
  height: 12px;
}

.tracks {
  position: relative;
  display: flex;
  flex: 1;
  flex-direction: column;
  min-height: 0;
  overflow: hidden;
}

.group {
  display: flex;
  flex: none;
  padding-right: 16px;
}

.group.audio {
  flex: 1;
  min-height: 0;
}

.rows {
  flex: 1;
  overflow: hidden;
}

.vscroll {
  display: flex;
  flex-direction: column;
  justify-content: space-between;
  width: 12px;
  margin: 4px 0;
  padding-top: 3px;
  background: #2f2f2f;
}

.audio .vscroll {
  padding: 0 0 6px;
}

.divider {
  flex: none;
  height: 5px;
  margin-right: 12px;
  background: #2f2f2f;
}

.playhead {
  position: absolute;
  top: 0;
  bottom: 0;
  left: 205px;
  width: 1px;
  background: #4590ef;
}

.timeline-scroll {
  justify-content: flex-start;
  gap: 193px;
  margin: 0 23px 12px 12px;
}

.track {
  display: flex;
  height: 25px;
  border-bottom: 1px solid #303030;
}

.track.tall,
.track.sound {
  height: 41px;
}

.track.last {
  height: 24px;
  border-bottom: 0;
}

.track-head {
  display: grid;
  grid-template-columns: 61px repeat(5, 24px);
  align-items: center;
  justify-items: center;
  flex: none;
  width: 205px;
  border-right: 1px solid #2a2a2a;
  color: #6e6e6e;
}

.track-head svg {
  width: 13px;
  height: 13px;
}

.track-head svg:first-child {
  justify-self: end;
  margin-right: 5px;
}

.patch {
  width: 24px;
  height: 100%;
  border-radius: 4px;
  color: #b4b4b4;
  font-weight: bold;
}

.patch.target {
  background: #005bcb;
  color: #e6eefa;
}

.lane {
  position: relative;
  flex: 1;
}

.clip {
  position: absolute;
  top: 0;
  bottom: 0;
  overflow: hidden;
  border: 1px solid;
  border-radius: 2px;
}

.clip.purple {
  background: #780f86;
  border-color: #8b3398;
}

.clip.violet {
  background: #3f0aae;
  border-color: #5226b4;
}

.clip.teal,
.clip.wave {
  background: #004d66;
  border-color: #0f6a83;
}

.clip.title {
  border: 0;
  background: #000;
}

.clip.selected {
  border: 2px solid #fff;
  outline: 1px solid #000;
  outline-offset: -3px;
  background: #005474;
}

.strip {
  height: 16px;
  background: #780f86;
  border-bottom: 1px solid #c19ac7;
}

.title .strip .fx {
  top: 0;
}

.caption-text {
  position: absolute;
  top: 25px;
  left: 7px;
  width: 26px;
  height: 4px;
}

.fade {
  position: absolute;
  bottom: 0;
  right: 0;
  width: 18px;
  height: 23px;
  padding: 1px;
  border: 1px solid #a8a8a8;
  border-radius: 2px;
  color: #4c4c4c;
}

.purple .fade {
  top: 0;
  border-color: #c19ac7;
  background: #23052b;
  color: #7a3a86;
}

.fade.start {
  left: 0;
}

.name {
  position: absolute;
  top: 0;
  left: 7px;
  color: #e6d6ea;
  font-size: 10px;
  line-height: 15px;
  white-space: nowrap;
}

.fade ~ .name {
  left: 26px;
}

.fx {
  font-style: italic;
}

.clip .fx {
  position: absolute;
  top: 0;
  right: 9px;
  color: #e6e6e6;
  font-size: 13px;
}

.clip .fx.dim {
  opacity: 0.3;
}

.clip.selected .fx {
  right: 7px;
  top: -1px;
}

.speech {
  position: absolute;
  top: 4px;
  right: 28px;
  width: 13px;
  height: 10px;
  color: #dce8ec;
}

.waveform {
  position: absolute;
  inset: 0;
  width: 100%;
  height: 100%;
  fill: #5cb2ea;
}

.level {
  position: absolute;
  top: 21px;
  left: 0;
  right: 0;
  height: 1px;
  background: #9fb6bd;
}

.corner {
  position: absolute;
  top: 0;
  left: 0;
  border: 2px solid;
  border-color: #fff transparent transparent #fff;
}

.corner.right {
  left: auto;
  right: 0;
  border-color: #fff #fff transparent transparent;
}

.handle {
  position: absolute;
  top: 14px;
  left: 5px;
  width: 10px;
  height: 10px;
  border: 1px solid #222;
  background: linear-gradient(135deg, #b4b4b4 50%, #6e6e6e 50%);
}

.handle.out {
  left: auto;
  right: 5px;
  background: linear-gradient(45deg, #6e6e6e 50%, #b4b4b4 50%);
}

/* audio meters */
.meters {
  display: grid;
  grid-template-columns: 101px 1fr;
  grid-template-rows: minmax(0, 1fr) 35px;
  padding: 27px 0 0 14px;
}

.meter {
  display: grid;
  grid-template-columns: 1fr 1fr;
  gap: 1px;
  background: linear-gradient(#2c2c2c 8px, #000 8px);
}

.bar {
  background: linear-gradient(#2c2c2c, #2c2c2c) 0 8px / 100% 1px no-repeat #000;
  border-bottom: 1px solid #e5df56;
}

.db {
  position: relative;
  margin: 11px 0 1px 1px;
  color: #a8a8a8;
}

.db i {
  position: absolute;
  width: 2px;
  height: 1px;
  background: #a8a8a8;
}

.db i.major {
  width: 4px;
}

.db span {
  position: absolute;
  left: 8px;
  margin-top: -7px;
}

.db .unit {
  margin-top: -11px;
}

.solo {
  display: flex;
  justify-content: space-around;
  align-items: flex-start;
  padding-top: 6px;
  color: #5a5a5a;
}

/* effects */
.effects-tools {
  display: flex;
  align-items: center;
  flex: none;
  gap: 16px;
  height: 43px;
  padding: 1px 10px 0;
}

.effects-tools .search {
  width: 192px;
  height: 24px;
  margin-right: -4px;
  padding-left: 8px;
  color: #757575;
}

.badge {
  position: relative;
  color: #757575;
}

.badge b {
  position: absolute;
  top: 1px;
  left: 0;
  right: 0;
  color: #1d1d1d;
  font-size: 9px;
}

.badge.yuv b {
  font-size: 7px;
}

.badge svg {
  height: 14px;
}

.effects-list {
  flex: 1;
  margin: 0 10px;
  padding: 1px 0 0;
  border: 1px solid #121212;
  border-radius: 4px;
  list-style: none;
}

.effects-list li {
  display: flex;
  align-items: center;
  height: 24px;
  padding-left: 8px;
}

.effects-list .chev {
  width: 10px;
  height: 10px;
  margin-right: 8px;
}

.effects-list .dir {
  width: 15px;
  height: 13px;
  margin-right: 6px;
}

.effects-footer {
  display: flex;
  justify-content: flex-end;
  flex: none;
  gap: 19px;
  height: 43px;
  padding-right: 16px;
  color: #6e6e6e;
}

.effects-footer svg {
  width: 14px;
  height: 13px;
}

/* lumetri */
.tabs-wrap {
  display: flex;
  flex: none;
  padding-right: 2px;
}

.tabs-wrap .tabs {
  flex: 1;
  min-width: 0;
  overflow: hidden;
}

.overflow {
  height: 16px;
  margin-top: 4px;
  padding: 0 4px 0 6px;
  border-left: 1px solid #6e6e6e;
  color: #8c8c8c;
}

.overflow svg {
  width: 12px;
  height: 10px;
}

.lum-tabs {
  display: flex;
  flex: none;
  gap: 20px;
  height: 20px;
  margin: 11px 0 0 20px;
  color: #6e6e6e;
  font-size: 11px;
}

.lum-tabs button {
  border-bottom: 2px solid transparent;
}

.lum-tabs .active {
  border-color: #d6d6d6;
}

.lum-clips {
  display: flex;
  flex: none;
  gap: 4px;
  margin: 16px 9px 0 17px;
  color: #6e6e6e;
  font-size: 12px;
}

.lum-clips button {
  justify-content: flex-start;
  height: 24px;
  padding-left: 7px;
  border: 1px solid #333;
  border-radius: 4px;
}

.lum-clips svg {
  width: 15px;
  height: 15px;
  margin-right: 6px;
}

.lum-clips .source {
  flex: none;
  width: 160px;
}

.lum-clips .master {
  flex: 1;
  min-width: 0;
  border-color: #2c2c2c;
  background: #2c2c2c;
  font-size: 11px;
}

.lum-effect {
  display: flex;
  align-items: center;
  flex: none;
  gap: 10px;
  height: 24px;
  margin: 12px 21px 11px 17px;
  color: #6e6e6e;
  font-size: 11px;
}

.lum-effect .select {
  flex: 1;
}

.lum-effect select {
  height: 24px;
  padding: 0 9px;
  border: 0;
  background: #2c2c2c;
}

.lum-effect .fx {
  font-size: 15px;
}

.lum-effect button svg {
  height: 14px;
}

.sections {
  border-top: 1px solid #101010;
}

.section {
  display: flex;
  align-items: center;
  height: 41px;
  margin-right: 8px;
  padding: 0 18px 0 11px;
  border-bottom: 1px solid #101010;
  font-weight: bold;
}

.section:last-child {
  border-bottom: 0;
}

.section svg {
  width: 11px;
  height: 11px;
  margin-right: 9px;
  color: #757575;
}

.section label {
  flex: 1;
}

.section input {
  appearance: none;
  width: 24px;
  height: 12px;
  border-radius: 6px;
  background: radial-gradient(circle at 18px 6px, #111 4px, #6e6e6e 5px);
}

/* create captions dialog */
.dialog {
  position: absolute;
  top: 184px;
  left: 50%;
  width: 472px;
  margin-left: -236px;
  border: 1px solid #3c3c3c;
  border-top: 0;
  border-radius: 8px;
  background: #1d1d1d;
  box-shadow: 0 8px 28px rgba(0, 0, 0, 0.35);
  color: #b8b8b8;
  font-size: 13px;
}

.dialog-title {
  display: flex;
  align-items: center;
  justify-content: space-between;
  height: 30px;
  padding: 0 8px;
  border-radius: 8px 8px 0 0;
  background: linear-gradient(90deg, #fbeef3, #f6f1f9);
  color: #111;
  font: 14px/28px "Noto Sans", sans-serif;
}

.dialog-title svg {
  width: 12px;
  height: 12px;
}

.dialog-body {
  padding: 12px 15px 26px;
}

.preset-label {
  display: block;
}

.preset {
  display: flex;
  align-items: center;
  margin-top: 16px;
}

.preset .select {
  flex: 1;
}

.preset button {
  width: 42px;
  padding-left: 12px;
}

.dialog .select svg {
  color: #b4b4b4;
}

.dialog .disabled select {
  border-color: #2c2c2c;
  background: #2c2c2c;
  color: #555;
}

.dialog .disabled svg {
  color: #555;
}

.prefs {
  justify-content: flex-start;
  width: 100%;
  height: 31px;
  margin-top: 12px;
  padding-top: 2px;
  border-bottom: 2px solid #383838;
  color: #8c8c8c;
  font-size: 12px;
}

.prefs svg {
  width: 15px;
  height: 15px;
  margin-right: 8px;
}

.prefs span {
  margin-left: 4px;
  color: #f0f0f0;
  font-size: 13px;
}

.field {
  display: block;
  padding: 7px 0 5px;
}

.prefs + .field {
  padding-top: 15px;
}

.sliders {
  display: grid;
  gap: 24px;
  padding-top: 19px;
}

.slider {
  height: 46px;
}

.slider-head {
  display: flex;
  align-items: center;
  height: 22px;
}

.help {
  width: 20px;
  height: 20px;
  margin-left: 8px;
  border-radius: 50%;
  background: #d4d4d4;
  color: #1d1d1d;
  font-size: 16px;
  line-height: 20px;
  text-align: center;
}

.slider-head output {
  margin: 0 0 8px auto;
  font-size: 11px;
}

.slider input {
  display: block;
  width: 100%;
  margin-top: 8px;
}

.lines-label {
  padding-top: 23px;
}

.radios {
  display: flex;
  align-items: center;
  margin-top: 14px;
}

.radios input {
  appearance: none;
  width: 14px;
  height: 14px;
  margin-right: 9px;
  border: 2px solid #8c8c8c;
  border-radius: 50%;
}

.radios input:checked {
  border: 5px solid #2680eb;
}

.radios label {
  margin-right: 16px;
}

.actions {
  display: flex;
  justify-content: flex-end;
  gap: 14px;
  margin-top: 35px;
}

.actions .primary {
  background: #1473e6;
}

.actions .outline {
  border-color: #a0a0a0;
}
```
